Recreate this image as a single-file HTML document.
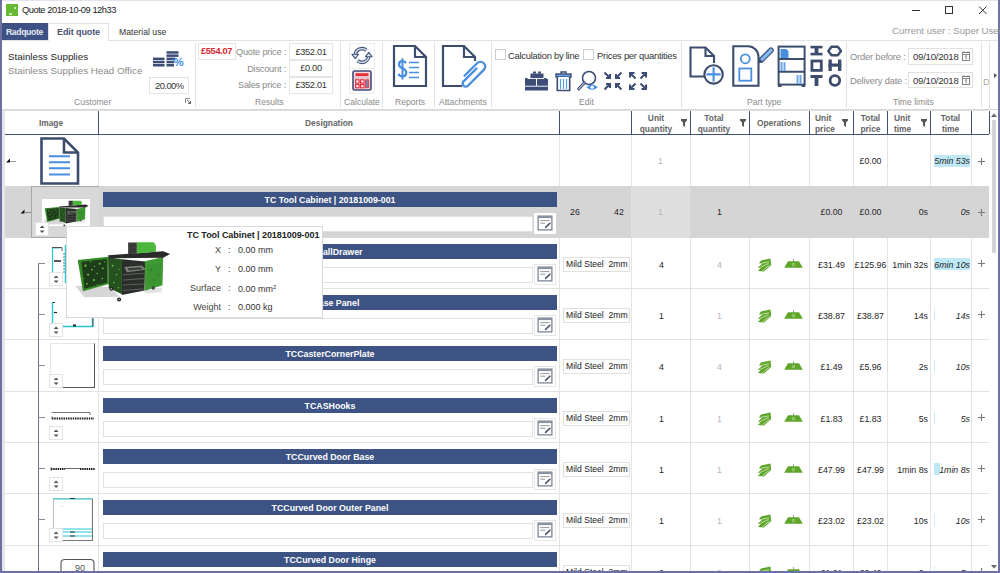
<!DOCTYPE html>
<html><head><meta charset="utf-8">
<style>
*{margin:0;padding:0;box-sizing:border-box}
html,body{width:1000px;height:573px;overflow:hidden;background:#fff}
body{position:relative;font-family:"Liberation Sans",sans-serif;font-size:9px;color:#222}
.a{position:absolute}
.t{position:absolute;white-space:nowrap;line-height:1}
.gl{position:absolute;top:97px;font-size:8.6px;color:#8a8a8a;white-space:nowrap;line-height:10px}
.sep{position:absolute;top:42px;height:66px;width:1px;background:#e3e3e3}
.box{position:absolute;background:#fff;border:1px solid #e0e0e0}
.hd{position:absolute;top:111px;height:23px;font-weight:bold;font-size:8.4px;color:#666;line-height:11px;white-space:nowrap}
.vl{position:absolute;top:135px;height:438px;width:1px;background:#e4e4e4}
.hl{position:absolute;left:4px;width:985px;height:1px;background:#e2e2e2}
.bar{position:absolute;left:103px;width:454px;height:15px;background:#3c5384;color:#fff;font-weight:bold;font-size:8.8px;line-height:17px;text-align:center;white-space:nowrap}
.tb{position:absolute;left:103px;width:430px;height:16px;background:#fff;border:1px solid #e0e0e0}
.eb{position:absolute;left:534px;width:22px;height:21px;background:#fff;border:1px solid #e6e6e6}
.mat{position:absolute;left:563px;width:67px;height:15px;background:#fff;border:1px solid #e0e0e0;font-size:8.6px;line-height:13px;padding-left:2px;white-space:nowrap;color:#222}
.num{position:absolute;font-size:8.8px;line-height:10px;white-space:nowrap;color:#222}
.sp{position:absolute;width:14px;height:14px;background:#fff;border:1px solid #e2e2e2}
</style></head><body>

<!-- TABLE START -->
<!-- table body -->
<div class="hl" style="top:186px"></div>
<div class="hl" style="top:237px"></div>
<div class="hl" style="top:288px"></div>
<div class="hl" style="top:339px"></div>
<div class="hl" style="top:391px"></div>
<div class="hl" style="top:442px"></div>
<div class="hl" style="top:493px"></div>
<div class="hl" style="top:545px"></div>
<div class="vl" style="left:98px"></div>
<div class="vl" style="left:559px"></div>
<div class="vl" style="left:631px"></div>
<div class="vl" style="left:690px"></div>
<div class="vl" style="left:749px"></div>
<div class="vl" style="left:809px"></div>
<div class="vl" style="left:853px"></div>
<div class="vl" style="left:887px"></div>
<div class="vl" style="left:930px"></div>
<div class="vl" style="left:971px"></div>
<div class="a" style="left:4px;top:186px;width:985px;height:52px;background:#d6d5d6"></div>
<div class="a" style="left:631px;top:186px;width:59px;height:52px;background:#e0dfe0"></div>
<div class="a" style="left:31px;top:186px;width:68px;height:52px;background:#d9d8d9;border:1px solid #a8a8a8;border-right:none"></div>
<!-- table header -->
<div class="a" style="left:4px;top:110px;width:985px;height:1px;background:#e0e0e0"></div>
<div class="a" style="left:4px;top:134px;width:985px;height:1px;background:#44507a"></div>
<div class="a" style="left:98px;top:111px;width:1px;height:23px;background:#44507a"></div>
<div class="a" style="left:559px;top:111px;width:1px;height:23px;background:#44507a"></div>
<div class="a" style="left:631px;top:111px;width:1px;height:23px;background:#44507a"></div>
<div class="a" style="left:690px;top:111px;width:1px;height:23px;background:#44507a"></div>
<div class="a" style="left:749px;top:111px;width:1px;height:23px;background:#44507a"></div>
<div class="a" style="left:809px;top:111px;width:1px;height:23px;background:#44507a"></div>
<div class="a" style="left:853px;top:111px;width:1px;height:23px;background:#44507a"></div>
<div class="a" style="left:887px;top:111px;width:1px;height:23px;background:#44507a"></div>
<div class="a" style="left:930px;top:111px;width:1px;height:23px;background:#44507a"></div>
<div class="a" style="left:971px;top:111px;width:1px;height:23px;background:#44507a"></div>
<div class="a" style="left:989px;top:111px;width:1px;height:23px;background:#44507a"></div>
<div class="hd" style="left:4px;width:94px;top:118px;text-align:center">Image</div>
<div class="hd" style="left:99px;width:460px;top:118px;text-align:center">Designation</div>
<div class="hd" style="left:631px;width:50px;top:113px;text-align:center">Unit<br>quantity</div>
<div class="hd" style="left:690px;width:48px;top:113px;text-align:center">Total<br>quantity</div>
<div class="hd" style="left:749px;width:60px;top:118px;text-align:center">Operations</div>
<div class="hd" style="left:815px;width:30px;top:113px;text-align:left">Unit<br>price</div>
<div class="hd" style="left:853px;width:35px;top:113px;text-align:center">Total<br>price</div>
<div class="hd" style="left:894px;width:30px;top:113px;text-align:left">Unit<br>time</div>
<div class="hd" style="left:930px;width:41px;top:113px;text-align:center">Total<br>time</div>
<svg class="a" style="left:681px;top:119px" width="6" height="8" viewBox="0 0 6 8"><path d="M0 0H6V1.5L4 3.5V8L2 6.5V3.5L0 1.5Z" fill="#555"/></svg>
<svg class="a" style="left:740px;top:119px" width="6" height="8" viewBox="0 0 6 8"><path d="M0 0H6V1.5L4 3.5V8L2 6.5V3.5L0 1.5Z" fill="#555"/></svg>
<svg class="a" style="left:842px;top:119px" width="6" height="8" viewBox="0 0 6 8"><path d="M0 0H6V1.5L4 3.5V8L2 6.5V3.5L0 1.5Z" fill="#555"/></svg>
<svg class="a" style="left:921px;top:119px" width="6" height="8" viewBox="0 0 6 8"><path d="M0 0H6V1.5L4 3.5V8L2 6.5V3.5L0 1.5Z" fill="#555"/></svg>
<div class="a" style="left:990px;top:110px;width:8px;height:462px;background:#fff"></div>
<svg class="a" style="left:991px;top:113px" width="6" height="4" viewBox="0 0 6 4"><path d="M0 4L3 0.5L6 4Z" fill="#666"/></svg>
<svg class="a" style="left:991px;top:565px" width="6" height="4" viewBox="0 0 6 4"><path d="M0 0L3 3.5L6 0Z" fill="#666"/></svg>
<div class="a" style="left:992px;top:120px;width:4px;height:133px;background:#d4d4d4"></div>
<div class="a" style="left:2px;top:110px;width:3px;height:462px;background:#e3e6eb"></div>
<svg class="a" style="left:5px;top:157px" width="12" height="7" viewBox="0 0 12 7"><path d="M1 5.5L5 1.5V5.5Z" fill="#111"/><path d="M5 4.5H11" stroke="#999" stroke-width="1"/></svg>
<svg class="a" style="left:39px;top:136px" width="42" height="50" viewBox="0 0 42 50">
 <path d="M2.5 2.5H25L39 16.5V47.5H2.5Z" fill="#fff" stroke="#3d4d6e" stroke-width="2.6"/>
 <path d="M25 2.5V16.5H39" fill="none" stroke="#3d4d6e" stroke-width="2.6"/>
 <g stroke="#4a8fdf" stroke-width="2"><path d="M10 20.3H31M10 26.3H31M10 32.3H31M10 38.5H31"/></g>
</svg>
<div class="num" style="left:631px;width:59px;top:156px;text-align:center;color:#b5b5b5;">1</div>
<div class="num" style="left:853px;width:35px;top:156px;text-align:center;color:#262626;">£0.00</div>
<div class="a" style="left:934px;top:155px;width:36px;height:12px;background:#bfe9f7"></div>
<div class="num" style="left:930px;width:40px;top:156px;text-align:right;color:#262626;font-style:italic;">5min 53s</div>
<svg class="a" style="left:977px;top:157px" width="9" height="9" viewBox="0 0 9 9"><path d="M4.5 1V8M1 4.5H8" stroke="#7a7a7a" stroke-width="1.1"/></svg>
<svg class="a" style="left:19px;top:208px" width="13" height="7" viewBox="0 0 13 7"><path d="M1.5 5.5L5.5 1.5V5.5Z" fill="#111"/><path d="M5.5 4.5H12" stroke="#888" stroke-width="1"/></svg>
<div class="a" style="left:42px;top:199px;width:48px;height:27px;background:#fff"></div>
<svg class="a" style="left:41px;top:198px" width="50" height="32" viewBox="0 0 813 573" preserveAspectRatio="none">
 <path d="M40 385L300 395L390 470L110 475Z" fill="#c4c4c4" opacity="0.7"/>
 <path d="M560 425L715 395L705 435L600 445Z" fill="#cfcfcf" opacity="0.6"/>
 <path d="M60 185L295 160L300 372L100 428Z" fill="#348a27"/>
 <path d="M88 200L285 178L288 360L112 408Z" fill="#1e3d19"/>
 <path d="M295 165L402 180L402 452L300 402Z" fill="#25521e"/>
 <path d="M402 180L582 198L577 422L402 456Z" fill="#2b2f2b"/>
 <g stroke="#5c5f5c" stroke-width="8"><path d="M410 300L572 288M410 340L572 330M410 380L572 372M410 420L572 410"/></g>
 <path d="M420 240L555 228L592 262L440 280Z" fill="#7c7f7c"/>
 <path d="M445 250L545 242L565 258L455 268Z" fill="#3a3c3a"/>
 <path d="M580 195L722 162L716 382L580 424Z" fill="#3f9a33"/>
 <path d="M598 230L700 205L698 360L600 390Z" fill="#3a8f30" opacity="0.6"/>
 <path d="M295 150L722 118L775 140L722 168L300 172Z" fill="#2a2a2a"/>
 <path d="M450 50L518 50L518 135L450 142Z" fill="#3a3a3a"/>
 <path d="M518 48L648 48L665 72L665 122L518 136Z" fill="#4db63c"/>
 <g fill="#6cc64c">
  <circle cx="120" cy="230" r="9"/><circle cx="170" cy="260" r="7"/><circle cx="230" cy="215" r="8"/><circle cx="140" cy="300" r="8"/><circle cx="210" cy="290" r="6"/><circle cx="255" cy="250" r="7"/><circle cx="185" cy="340" r="8"/><circle cx="250" cy="330" r="6"/><circle cx="130" cy="370" r="7"/><circle cx="215" cy="380" r="5"/><circle cx="160" cy="200" r="5"/><circle cx="270" cy="200" r="5"/><circle cx="100" cy="330" r="5"/><circle cx="190" cy="235" r="5"/>
  <circle cx="330" cy="230" r="7"/><circle cx="360" cy="300" r="6"/><circle cx="340" cy="360" r="6"/><circle cx="380" cy="260" r="5"/><circle cx="375" cy="400" r="5"/>
 </g>
 <g fill="#2e7a24"><circle cx="630" cy="260" r="9"/><circle cx="680" cy="300" r="7"/><circle cx="650" cy="340" r="6"/><circle cx="700" cy="230" r="5"/></g>
 <g fill="#2a2a2a"><circle cx="320" cy="408" r="15"/><circle cx="380" cy="492" r="16"/><circle cx="645" cy="402" r="13"/></g>
 <g fill="#aaa"><circle cx="320" cy="408" r="6"/><circle cx="380" cy="492" r="6"/><circle cx="645" cy="402" r="5"/></g>
</svg>
<div class="sp" style="left:35px;top:222px"></div>
<div class="bar" style="top:192px">TC Tool Cabinet | 20181009-001</div>
<div class="tb" style="top:216px"></div>
<div class="num" style="left:570px;width:0px;top:207px;text-align:center;color:#262626;">26</div>
<div class="num" style="left:614px;width:0px;top:207px;text-align:center;color:#262626;">42</div>
<div class="num" style="left:631px;width:59px;top:207px;text-align:center;color:#b5b5b5;">1</div>
<div class="num" style="left:690px;width:59px;top:207px;text-align:center;color:#262626;">1</div>
<div class="num" style="left:809px;width:45px;top:207px;text-align:center;color:#262626;">£0.00</div>
<div class="num" style="left:853px;width:35px;top:207px;text-align:center;color:#262626;">£0.00</div>
<div class="num" style="left:887px;width:41px;top:207px;text-align:right;color:#262626;">0s</div>
<div class="num" style="left:930px;width:40px;top:207px;text-align:right;color:#262626;font-style:italic;">0s</div>
<svg class="a" style="left:977px;top:208px" width="9" height="9" viewBox="0 0 9 9"><path d="M4.5 1V8M1 4.5H8" stroke="#7a7a7a" stroke-width="1.1"/></svg>
<div class="bar" style="top:244px">TCSmallDrawer</div>
<div class="tb" style="top:267px"></div>
<div class="eb" style="top:264px;height:21px"></div>
<div class="mat" style="top:257px">Mild Steel&nbsp; 2mm</div>
<div class="num" style="left:632px;width:59px;top:260px;text-align:center;color:#262626;">4</div>
<div class="num" style="left:690px;width:59px;top:260px;text-align:center;color:#b5b5b5;">4</div>
<svg class="a" style="left:757px;top:258px" width="15" height="14" viewBox="0 0 15 14"><path d="M4 2.5L13.5 0.5L14.2 7L7 13.5L0.8 13L3.5 10.5L1 9.5L5 6L2 5.2Z" fill="#5ea52a"/><path d="M3.5 5.5L12 3.8M2.5 9.8L11.5 5.5M5.5 12.8L12.5 7" stroke="#d8efc4" stroke-width="0.8"/></svg>
<svg class="a" style="left:784px;top:259px" width="19" height="9" viewBox="0 0 19 9"><path d="M9.5 0V3" stroke="#8a8a8a" stroke-width="0.8"/><path d="M4 2.2H15L18.8 8.8H0.2Z" fill="#5ea52a"/><circle cx="9.5" cy="5.6" r="1.2" fill="none" stroke="#cfe8b8" stroke-width="0.7"/></svg>
<div class="num" style="left:809px;width:45px;top:260px;text-align:center;color:#262626;">£31.49</div>
<div class="num" style="left:853px;width:35px;top:260px;text-align:center;color:#262626;">£125.96</div>
<div class="num" style="left:887px;width:41px;top:260px;text-align:right;color:#262626;">1min 32s</div>
<div class="a" style="left:934px;top:258px;width:36px;height:12px;background:#bfe9f7"></div>
<div class="num" style="left:930px;width:40px;top:260px;text-align:right;color:#262626;font-style:italic;">6min 10s</div>
<svg class="a" style="left:977px;top:259px" width="9" height="9" viewBox="0 0 9 9"><path d="M4.5 1V8M1 4.5H8" stroke="#7a7a7a" stroke-width="1.1"/></svg>
<div class="bar" style="top:295px">TCBase Panel</div>
<div class="tb" style="top:318px"></div>
<div class="eb" style="top:315px;height:21px"></div>
<div class="mat" style="top:308px">Mild Steel&nbsp; 2mm</div>
<div class="num" style="left:632px;width:59px;top:311px;text-align:center;color:#262626;">1</div>
<div class="num" style="left:690px;width:59px;top:311px;text-align:center;color:#b5b5b5;">1</div>
<svg class="a" style="left:757px;top:309px" width="15" height="14" viewBox="0 0 15 14"><path d="M4 2.5L13.5 0.5L14.2 7L7 13.5L0.8 13L3.5 10.5L1 9.5L5 6L2 5.2Z" fill="#5ea52a"/><path d="M3.5 5.5L12 3.8M2.5 9.8L11.5 5.5M5.5 12.8L12.5 7" stroke="#d8efc4" stroke-width="0.8"/></svg>
<svg class="a" style="left:784px;top:310px" width="19" height="9" viewBox="0 0 19 9"><path d="M9.5 0V3" stroke="#8a8a8a" stroke-width="0.8"/><path d="M4 2.2H15L18.8 8.8H0.2Z" fill="#5ea52a"/><circle cx="9.5" cy="5.6" r="1.2" fill="none" stroke="#cfe8b8" stroke-width="0.7"/></svg>
<div class="num" style="left:809px;width:45px;top:311px;text-align:center;color:#262626;">£38.87</div>
<div class="num" style="left:853px;width:35px;top:311px;text-align:center;color:#262626;">£38.87</div>
<div class="num" style="left:887px;width:41px;top:311px;text-align:right;color:#262626;">14s</div>
<div class="a" style="left:934px;top:309px;width:1px;height:12px;background:#cdeef9"></div>
<div class="num" style="left:930px;width:40px;top:311px;text-align:right;color:#262626;font-style:italic;">14s</div>
<svg class="a" style="left:977px;top:310px" width="9" height="9" viewBox="0 0 9 9"><path d="M4.5 1V8M1 4.5H8" stroke="#7a7a7a" stroke-width="1.1"/></svg>
<div class="bar" style="top:346px">TCCasterCornerPlate</div>
<div class="tb" style="top:369px"></div>
<div class="eb" style="top:366px;height:21px"></div>
<div class="mat" style="top:359px">Mild Steel&nbsp; 2mm</div>
<div class="num" style="left:632px;width:59px;top:362px;text-align:center;color:#262626;">4</div>
<div class="num" style="left:690px;width:59px;top:362px;text-align:center;color:#b5b5b5;">4</div>
<svg class="a" style="left:757px;top:360px" width="15" height="14" viewBox="0 0 15 14"><path d="M4 2.5L13.5 0.5L14.2 7L7 13.5L0.8 13L3.5 10.5L1 9.5L5 6L2 5.2Z" fill="#5ea52a"/><path d="M3.5 5.5L12 3.8M2.5 9.8L11.5 5.5M5.5 12.8L12.5 7" stroke="#d8efc4" stroke-width="0.8"/></svg>
<svg class="a" style="left:784px;top:361px" width="19" height="9" viewBox="0 0 19 9"><path d="M9.5 0V3" stroke="#8a8a8a" stroke-width="0.8"/><path d="M4 2.2H15L18.8 8.8H0.2Z" fill="#5ea52a"/><circle cx="9.5" cy="5.6" r="1.2" fill="none" stroke="#cfe8b8" stroke-width="0.7"/></svg>
<div class="num" style="left:809px;width:45px;top:362px;text-align:center;color:#262626;">£1.49</div>
<div class="num" style="left:853px;width:35px;top:362px;text-align:center;color:#262626;">£5.96</div>
<div class="num" style="left:887px;width:41px;top:362px;text-align:right;color:#262626;">2s</div>
<div class="a" style="left:934px;top:360px;width:1px;height:12px;background:#cdeef9"></div>
<div class="num" style="left:930px;width:40px;top:362px;text-align:right;color:#262626;font-style:italic;">10s</div>
<div class="bar" style="top:398px">TCASHooks</div>
<div class="tb" style="top:421px"></div>
<div class="eb" style="top:418px;height:21px"></div>
<div class="mat" style="top:411px">Mild Steel&nbsp; 2mm</div>
<div class="num" style="left:632px;width:59px;top:414px;text-align:center;color:#262626;">1</div>
<div class="num" style="left:690px;width:59px;top:414px;text-align:center;color:#b5b5b5;">1</div>
<svg class="a" style="left:757px;top:412px" width="15" height="14" viewBox="0 0 15 14"><path d="M4 2.5L13.5 0.5L14.2 7L7 13.5L0.8 13L3.5 10.5L1 9.5L5 6L2 5.2Z" fill="#5ea52a"/><path d="M3.5 5.5L12 3.8M2.5 9.8L11.5 5.5M5.5 12.8L12.5 7" stroke="#d8efc4" stroke-width="0.8"/></svg>
<svg class="a" style="left:784px;top:413px" width="19" height="9" viewBox="0 0 19 9"><path d="M9.5 0V3" stroke="#8a8a8a" stroke-width="0.8"/><path d="M4 2.2H15L18.8 8.8H0.2Z" fill="#5ea52a"/><circle cx="9.5" cy="5.6" r="1.2" fill="none" stroke="#cfe8b8" stroke-width="0.7"/></svg>
<div class="num" style="left:809px;width:45px;top:414px;text-align:center;color:#262626;">£1.83</div>
<div class="num" style="left:853px;width:35px;top:414px;text-align:center;color:#262626;">£1.83</div>
<div class="num" style="left:887px;width:41px;top:414px;text-align:right;color:#262626;">5s</div>
<div class="a" style="left:934px;top:412px;width:1px;height:12px;background:#cdeef9"></div>
<div class="num" style="left:930px;width:40px;top:414px;text-align:right;color:#262626;font-style:italic;">5s</div>
<svg class="a" style="left:977px;top:413px" width="9" height="9" viewBox="0 0 9 9"><path d="M4.5 1V8M1 4.5H8" stroke="#7a7a7a" stroke-width="1.1"/></svg>
<div class="bar" style="top:449px">TCCurved Door Base</div>
<div class="tb" style="top:472px"></div>
<div class="eb" style="top:469px;height:21px"></div>
<div class="mat" style="top:462px">Mild Steel&nbsp; 2mm</div>
<div class="num" style="left:632px;width:59px;top:465px;text-align:center;color:#262626;">1</div>
<div class="num" style="left:690px;width:59px;top:465px;text-align:center;color:#b5b5b5;">1</div>
<svg class="a" style="left:757px;top:463px" width="15" height="14" viewBox="0 0 15 14"><path d="M4 2.5L13.5 0.5L14.2 7L7 13.5L0.8 13L3.5 10.5L1 9.5L5 6L2 5.2Z" fill="#5ea52a"/><path d="M3.5 5.5L12 3.8M2.5 9.8L11.5 5.5M5.5 12.8L12.5 7" stroke="#d8efc4" stroke-width="0.8"/></svg>
<svg class="a" style="left:784px;top:464px" width="19" height="9" viewBox="0 0 19 9"><path d="M9.5 0V3" stroke="#8a8a8a" stroke-width="0.8"/><path d="M4 2.2H15L18.8 8.8H0.2Z" fill="#5ea52a"/><circle cx="9.5" cy="5.6" r="1.2" fill="none" stroke="#cfe8b8" stroke-width="0.7"/></svg>
<div class="num" style="left:809px;width:45px;top:465px;text-align:center;color:#262626;">£47.99</div>
<div class="num" style="left:853px;width:35px;top:465px;text-align:center;color:#262626;">£47.99</div>
<div class="num" style="left:887px;width:41px;top:465px;text-align:right;color:#262626;">1min 8s</div>
<div class="a" style="left:934px;top:463px;width:6px;height:12px;background:#bfe9f7"></div>
<div class="num" style="left:930px;width:40px;top:465px;text-align:right;color:#262626;font-style:italic;">1min 8s</div>
<svg class="a" style="left:977px;top:464px" width="9" height="9" viewBox="0 0 9 9"><path d="M4.5 1V8M1 4.5H8" stroke="#7a7a7a" stroke-width="1.1"/></svg>
<div class="bar" style="top:500px">TCCurved Door Outer Panel</div>
<div class="tb" style="top:523px"></div>
<div class="eb" style="top:520px;height:21px"></div>
<div class="mat" style="top:513px">Mild Steel&nbsp; 2mm</div>
<div class="num" style="left:632px;width:59px;top:516px;text-align:center;color:#262626;">1</div>
<div class="num" style="left:690px;width:59px;top:516px;text-align:center;color:#b5b5b5;">1</div>
<svg class="a" style="left:757px;top:514px" width="15" height="14" viewBox="0 0 15 14"><path d="M4 2.5L13.5 0.5L14.2 7L7 13.5L0.8 13L3.5 10.5L1 9.5L5 6L2 5.2Z" fill="#5ea52a"/><path d="M3.5 5.5L12 3.8M2.5 9.8L11.5 5.5M5.5 12.8L12.5 7" stroke="#d8efc4" stroke-width="0.8"/></svg>
<svg class="a" style="left:784px;top:515px" width="19" height="9" viewBox="0 0 19 9"><path d="M9.5 0V3" stroke="#8a8a8a" stroke-width="0.8"/><path d="M4 2.2H15L18.8 8.8H0.2Z" fill="#5ea52a"/><circle cx="9.5" cy="5.6" r="1.2" fill="none" stroke="#cfe8b8" stroke-width="0.7"/></svg>
<div class="num" style="left:809px;width:45px;top:516px;text-align:center;color:#262626;">£23.02</div>
<div class="num" style="left:853px;width:35px;top:516px;text-align:center;color:#262626;">£23.02</div>
<div class="num" style="left:887px;width:41px;top:516px;text-align:right;color:#262626;">10s</div>
<div class="a" style="left:934px;top:514px;width:1px;height:12px;background:#cdeef9"></div>
<div class="num" style="left:930px;width:40px;top:516px;text-align:right;color:#262626;font-style:italic;">10s</div>
<svg class="a" style="left:977px;top:515px" width="9" height="9" viewBox="0 0 9 9"><path d="M4.5 1V8M1 4.5H8" stroke="#7a7a7a" stroke-width="1.1"/></svg>
<div class="bar" style="top:552px">TCCurved Door Hinge</div>
<div class="tb" style="top:575px"></div>
<div class="eb" style="top:572px;height:21px"></div>
<div class="mat" style="top:565px">Mild Steel&nbsp; 2mm</div>
<div class="num" style="left:632px;width:59px;top:568px;text-align:center;color:#262626;">2</div>
<div class="num" style="left:690px;width:59px;top:568px;text-align:center;color:#b5b5b5;">2</div>
<svg class="a" style="left:757px;top:566px" width="15" height="14" viewBox="0 0 15 14"><path d="M4 2.5L13.5 0.5L14.2 7L7 13.5L0.8 13L3.5 10.5L1 9.5L5 6L2 5.2Z" fill="#5ea52a"/><path d="M3.5 5.5L12 3.8M2.5 9.8L11.5 5.5M5.5 12.8L12.5 7" stroke="#d8efc4" stroke-width="0.8"/></svg>
<svg class="a" style="left:784px;top:567px" width="19" height="9" viewBox="0 0 19 9"><path d="M9.5 0V3" stroke="#8a8a8a" stroke-width="0.8"/><path d="M4 2.2H15L18.8 8.8H0.2Z" fill="#5ea52a"/><circle cx="9.5" cy="5.6" r="1.2" fill="none" stroke="#cfe8b8" stroke-width="0.7"/></svg>
<div class="num" style="left:809px;width:45px;top:568px;text-align:center;color:#262626;">£1.21</div>
<div class="num" style="left:853px;width:35px;top:568px;text-align:center;color:#262626;">£2.42</div>
<div class="num" style="left:887px;width:41px;top:568px;text-align:right;color:#262626;">2s</div>
<div class="a" style="left:934px;top:566px;width:1px;height:12px;background:#cdeef9"></div>
<div class="num" style="left:930px;width:40px;top:568px;text-align:right;color:#262626;font-style:italic;">5s</div>
<svg class="a" style="left:977px;top:567px" width="9" height="9" viewBox="0 0 9 9"><path d="M4.5 1V8M1 4.5H8" stroke="#7a7a7a" stroke-width="1.1"/></svg>
<div class="a" style="left:38px;top:263px;width:1px;height:310px;background:#6e7098"></div>
<div class="a" style="left:38px;top:263px;width:7px;height:1px;background:#8a8a8a"></div>
<div class="a" style="left:38px;top:314px;width:7px;height:1px;background:#8a8a8a"></div>
<div class="a" style="left:38px;top:365px;width:7px;height:1px;background:#8a8a8a"></div>
<div class="a" style="left:38px;top:417px;width:7px;height:1px;background:#8a8a8a"></div>
<div class="a" style="left:38px;top:468px;width:7px;height:1px;background:#8a8a8a"></div>
<div class="a" style="left:38px;top:519px;width:7px;height:1px;background:#8a8a8a"></div>
<div class="a" style="left:38px;top:571px;width:7px;height:1px;background:#8a8a8a"></div>
<div class="eb" style="top:213px;border-color:#fff"></div>
<svg class="a" style="left:537px;top:215px" width="16" height="16" viewBox="0 0 16 16"><rect x="1.1" y="1.1" width="13.8" height="13.8" fill="#fff" stroke="#747c8c" stroke-width="1.2"/><rect x="1.1" y="1.1" width="13.8" height="2" fill="#8a92a2"/><path d="M3.3 5.6H12.5M3.3 8.2H8.2" stroke="#8a8a8a" stroke-width="0.9"/><path d="M8.6 12.4L12.9 8.2" stroke="#4c5468" stroke-width="1.6" stroke-linecap="round"/></svg>
<svg class="a" style="left:537px;top:266px" width="16" height="16" viewBox="0 0 16 16"><rect x="1.1" y="1.1" width="13.8" height="13.8" fill="#fff" stroke="#747c8c" stroke-width="1.2"/><rect x="1.1" y="1.1" width="13.8" height="2" fill="#8a92a2"/><path d="M3.3 5.6H12.5M3.3 8.2H8.2" stroke="#8a8a8a" stroke-width="0.9"/><path d="M8.6 12.4L12.9 8.2" stroke="#4c5468" stroke-width="1.6" stroke-linecap="round"/></svg>
<svg class="a" style="left:537px;top:317px" width="16" height="16" viewBox="0 0 16 16"><rect x="1.1" y="1.1" width="13.8" height="13.8" fill="#fff" stroke="#747c8c" stroke-width="1.2"/><rect x="1.1" y="1.1" width="13.8" height="2" fill="#8a92a2"/><path d="M3.3 5.6H12.5M3.3 8.2H8.2" stroke="#8a8a8a" stroke-width="0.9"/><path d="M8.6 12.4L12.9 8.2" stroke="#4c5468" stroke-width="1.6" stroke-linecap="round"/></svg>
<svg class="a" style="left:537px;top:368px" width="16" height="16" viewBox="0 0 16 16"><rect x="1.1" y="1.1" width="13.8" height="13.8" fill="#fff" stroke="#747c8c" stroke-width="1.2"/><rect x="1.1" y="1.1" width="13.8" height="2" fill="#8a92a2"/><path d="M3.3 5.6H12.5M3.3 8.2H8.2" stroke="#8a8a8a" stroke-width="0.9"/><path d="M8.6 12.4L12.9 8.2" stroke="#4c5468" stroke-width="1.6" stroke-linecap="round"/></svg>
<svg class="a" style="left:537px;top:420px" width="16" height="16" viewBox="0 0 16 16"><rect x="1.1" y="1.1" width="13.8" height="13.8" fill="#fff" stroke="#747c8c" stroke-width="1.2"/><rect x="1.1" y="1.1" width="13.8" height="2" fill="#8a92a2"/><path d="M3.3 5.6H12.5M3.3 8.2H8.2" stroke="#8a8a8a" stroke-width="0.9"/><path d="M8.6 12.4L12.9 8.2" stroke="#4c5468" stroke-width="1.6" stroke-linecap="round"/></svg>
<svg class="a" style="left:537px;top:471px" width="16" height="16" viewBox="0 0 16 16"><rect x="1.1" y="1.1" width="13.8" height="13.8" fill="#fff" stroke="#747c8c" stroke-width="1.2"/><rect x="1.1" y="1.1" width="13.8" height="2" fill="#8a92a2"/><path d="M3.3 5.6H12.5M3.3 8.2H8.2" stroke="#8a8a8a" stroke-width="0.9"/><path d="M8.6 12.4L12.9 8.2" stroke="#4c5468" stroke-width="1.6" stroke-linecap="round"/></svg>
<svg class="a" style="left:537px;top:522px" width="16" height="16" viewBox="0 0 16 16"><rect x="1.1" y="1.1" width="13.8" height="13.8" fill="#fff" stroke="#747c8c" stroke-width="1.2"/><rect x="1.1" y="1.1" width="13.8" height="2" fill="#8a92a2"/><path d="M3.3 5.6H12.5M3.3 8.2H8.2" stroke="#8a8a8a" stroke-width="0.9"/><path d="M8.6 12.4L12.9 8.2" stroke="#4c5468" stroke-width="1.6" stroke-linecap="round"/></svg>
<svg class="a" style="left:537px;top:574px" width="16" height="16" viewBox="0 0 16 16"><rect x="1.1" y="1.1" width="13.8" height="13.8" fill="#fff" stroke="#747c8c" stroke-width="1.2"/><rect x="1.1" y="1.1" width="13.8" height="2" fill="#8a92a2"/><path d="M3.3 5.6H12.5M3.3 8.2H8.2" stroke="#8a8a8a" stroke-width="0.9"/><path d="M8.6 12.4L12.9 8.2" stroke="#4c5468" stroke-width="1.6" stroke-linecap="round"/></svg>
<svg class="a" style="left:50px;top:243px" width="17" height="42" viewBox="0 0 17 42"><path d="M2.5 36V5H10" stroke="#29c8d8" stroke-width="1.2" fill="none"/><path d="M2 4.5H12V8" stroke="#333" stroke-width="0.8" fill="none"/><path d="M4 18H11" stroke="#222" stroke-width="1.5"/><path d="M15.5 2V40" stroke="#29c8d8" stroke-width="1.5"/><path d="M14 10V30" stroke="#777" stroke-width="1" stroke-dasharray="2 1"/></svg>
<svg class="a" style="left:50px;top:299px" width="46" height="30" viewBox="0 0 46 30"><path d="M2.5 3V27.5H42.5V18" stroke="#29c8d8" stroke-width="1.4" fill="none"/><path d="M2.5 3.5H5" stroke="#333" stroke-width="1"/><path d="M4 13.5H7" stroke="#222" stroke-width="1.2"/><rect x="23" y="25.5" width="3" height="2" fill="#222"/><path d="M43 18V28" stroke="#333" stroke-width="0.8"/></svg>
<div class="a" style="left:50px;top:343px;width:45px;height:45px;background:#fff;border:1px solid #e6e6e6;border-right:1px solid #555;border-bottom:1px solid #555"></div>
<svg class="a" style="left:50px;top:410px" width="46" height="12" viewBox="0 0 46 12"><path d="M1.5 2.5H40M40 2.5V5" stroke="#555" stroke-width="0.8" fill="none"/><path d="M2 8.5H44" stroke="#222" stroke-width="2.2" stroke-dasharray="1.5 0.8"/><path d="M2 6.5V9" stroke="#444" stroke-width="0.8"/></svg>
<svg class="a" style="left:50px;top:465px" width="46" height="8" viewBox="0 0 46 8"><path d="M1 4H15M30 4H45" stroke="#222" stroke-width="2" stroke-dasharray="1.5 0.7"/><path d="M15 3.5H30" stroke="#444" stroke-width="0.8"/><path d="M1 2V6" stroke="#444" stroke-width="0.7"/></svg>
<svg class="a" style="left:52px;top:497px" width="44" height="47" viewBox="0 0 44 47"><rect x="1.5" y="1.5" width="39" height="42" fill="#fff" stroke="#bfbfbf" stroke-width="1"/><path d="M1.5 2H40.5M1.5 32H40.5M1.5 35H40.5M1.5 39H40.5" stroke="#29c8d8" stroke-width="1"/><path d="M40.5 2V43.5H1.5" stroke="#777" stroke-width="1.1" fill="none"/><path d="M18 1.5H23M18 35H23M18 39H23" stroke="#333" stroke-width="1"/><circle cx="10" cy="9" r="0.5" fill="#c99"/></svg>
<svg class="a" style="left:58px;top:558px" width="40" height="14" viewBox="0 0 40 14"><path d="M3 14V5Q3 1.5 7 1.5H32Q36 1.5 36 5V14" stroke="#555" stroke-width="1.1" fill="none"/><text x="17" y="13" font-family="Liberation Sans" font-size="9" fill="#555">90</text></svg>
<svg class="a" style="left:35px;top:222px" width="14" height="14" viewBox="0 0 14 14"><path d="M4.6 6.1H9.6L7.1 3.6Z M4.6 8.6H9.6L7.1 11.1Z" fill="#555"/></svg>
<div class="sp" style="left:49px;top:272px"></div>
<svg class="a" style="left:49px;top:272px" width="14" height="14" viewBox="0 0 14 14"><path d="M4.6 6.1H9.6L7.1 3.6Z M4.6 8.6H9.6L7.1 11.1Z" fill="#555"/></svg>
<div class="sp" style="left:49px;top:323px"></div>
<svg class="a" style="left:49px;top:323px" width="14" height="14" viewBox="0 0 14 14"><path d="M4.6 6.1H9.6L7.1 3.6Z M4.6 8.6H9.6L7.1 11.1Z" fill="#555"/></svg>
<div class="sp" style="left:49px;top:374px"></div>
<svg class="a" style="left:49px;top:374px" width="14" height="14" viewBox="0 0 14 14"><path d="M4.6 6.1H9.6L7.1 3.6Z M4.6 8.6H9.6L7.1 11.1Z" fill="#555"/></svg>
<div class="sp" style="left:49px;top:426px"></div>
<svg class="a" style="left:49px;top:426px" width="14" height="14" viewBox="0 0 14 14"><path d="M4.6 6.1H9.6L7.1 3.6Z M4.6 8.6H9.6L7.1 11.1Z" fill="#555"/></svg>
<div class="sp" style="left:49px;top:477px"></div>
<svg class="a" style="left:49px;top:477px" width="14" height="14" viewBox="0 0 14 14"><path d="M4.6 6.1H9.6L7.1 3.6Z M4.6 8.6H9.6L7.1 11.1Z" fill="#555"/></svg>
<div class="sp" style="left:49px;top:528px"></div>
<svg class="a" style="left:49px;top:528px" width="14" height="14" viewBox="0 0 14 14"><path d="M4.6 6.1H9.6L7.1 3.6Z M4.6 8.6H9.6L7.1 11.1Z" fill="#555"/></svg>
<div class="sp" style="left:49px;top:580px"></div>
<svg class="a" style="left:49px;top:580px" width="14" height="14" viewBox="0 0 14 14"><path d="M4.6 6.1H9.6L7.1 3.6Z M4.6 8.6H9.6L7.1 11.1Z" fill="#555"/></svg>
<div class="a" style="left:66px;top:226px;width:257px;height:92px;background:#fff;border:1px solid #d9d9d9"></div>
<div class="t" style="left:187px;top:231px;font-size:9px;font-weight:bold;color:#222;letter-spacing:-0.05px">TC Tool Cabinet | 20181009-001</div>
<div class="t" style="left:160px;width:61px;text-align:right;top:246px;font-size:9px;color:#444">X</div>
<div class="t" style="left:228px;top:246px;font-size:9px;color:#444">:</div>
<div class="t" style="left:160px;width:61px;text-align:right;top:265px;font-size:9px;color:#444">Y</div>
<div class="t" style="left:228px;top:265px;font-size:9px;color:#444">:</div>
<div class="t" style="left:160px;width:61px;text-align:right;top:284px;font-size:9px;color:#444">Surface</div>
<div class="t" style="left:228px;top:284px;font-size:9px;color:#444">:</div>
<div class="t" style="left:160px;width:61px;text-align:right;top:303px;font-size:9px;color:#444">Weight</div>
<div class="t" style="left:228px;top:303px;font-size:9px;color:#444">:</div>
<div class="t" style="left:238px;top:246px;font-size:9px;color:#333">0.00 mm</div>
<div class="t" style="left:238px;top:265px;font-size:9px;color:#333">0.00 mm</div>
<div class="t" style="left:238px;top:284px;font-size:9px;color:#333">0.00 mm<sup style="font-size:6px;vertical-align:3px">2</sup></div>
<div class="t" style="left:238px;top:303px;font-size:9px;color:#333">0.000 kg</div>
<svg class="a" style="left:70px;top:236px" width="105" height="74" viewBox="0 0 813 573" preserveAspectRatio="none">
 <path d="M40 385L300 395L390 470L110 475Z" fill="#c4c4c4" opacity="0.7"/>
 <path d="M560 425L715 395L705 435L600 445Z" fill="#cfcfcf" opacity="0.6"/>
 <path d="M60 185L295 160L300 372L100 428Z" fill="#348a27"/>
 <path d="M88 200L285 178L288 360L112 408Z" fill="#1e3d19"/>
 <path d="M295 165L402 180L402 452L300 402Z" fill="#25521e"/>
 <path d="M402 180L582 198L577 422L402 456Z" fill="#2b2f2b"/>
 <g stroke="#5c5f5c" stroke-width="8"><path d="M410 300L572 288M410 340L572 330M410 380L572 372M410 420L572 410"/></g>
 <path d="M420 240L555 228L592 262L440 280Z" fill="#7c7f7c"/>
 <path d="M445 250L545 242L565 258L455 268Z" fill="#3a3c3a"/>
 <path d="M580 195L722 162L716 382L580 424Z" fill="#3f9a33"/>
 <path d="M598 230L700 205L698 360L600 390Z" fill="#3a8f30" opacity="0.6"/>
 <path d="M295 150L722 118L775 140L722 168L300 172Z" fill="#2a2a2a"/>
 <path d="M450 50L518 50L518 135L450 142Z" fill="#3a3a3a"/>
 <path d="M518 48L648 48L665 72L665 122L518 136Z" fill="#4db63c"/>
 <g fill="#6cc64c">
  <circle cx="120" cy="230" r="9"/><circle cx="170" cy="260" r="7"/><circle cx="230" cy="215" r="8"/><circle cx="140" cy="300" r="8"/><circle cx="210" cy="290" r="6"/><circle cx="255" cy="250" r="7"/><circle cx="185" cy="340" r="8"/><circle cx="250" cy="330" r="6"/><circle cx="130" cy="370" r="7"/><circle cx="215" cy="380" r="5"/><circle cx="160" cy="200" r="5"/><circle cx="270" cy="200" r="5"/><circle cx="100" cy="330" r="5"/><circle cx="190" cy="235" r="5"/>
  <circle cx="330" cy="230" r="7"/><circle cx="360" cy="300" r="6"/><circle cx="340" cy="360" r="6"/><circle cx="380" cy="260" r="5"/><circle cx="375" cy="400" r="5"/>
 </g>
 <g fill="#2e7a24"><circle cx="630" cy="260" r="9"/><circle cx="680" cy="300" r="7"/><circle cx="650" cy="340" r="6"/><circle cx="700" cy="230" r="5"/></g>
 <g fill="#2a2a2a"><circle cx="320" cy="408" r="15"/><circle cx="380" cy="492" r="16"/><circle cx="645" cy="402" r="13"/></g>
 <g fill="#aaa"><circle cx="320" cy="408" r="6"/><circle cx="380" cy="492" r="6"/><circle cx="645" cy="402" r="5"/></g>
</svg>
<!-- TABLE END -->
<!-- window borders -->
<div class="a" style="left:0;top:0;width:1000px;height:1px;background:#e4e4ee"></div>
<div class="a" style="left:0;top:0;width:2px;height:573px;background:#6d6f9f"></div>
<div class="a" style="left:998px;top:0;width:2px;height:573px;background:#7072a6"></div>
<div class="a" style="left:0;top:571px;width:1000px;height:2px;background:#6d6fa8"></div>


<!-- title bar -->
<div class="a" style="left:6px;top:4px;width:12px;height:12px;background:#66b933"></div>
<div class="a" style="left:14px;top:7px;width:2px;height:2px;background:#c8eaa8"></div>
<div class="a" style="left:9px;top:13px;width:3px;height:2px;background:#c9e8b0"></div>
<div class="t" style="left:22px;top:6px;font-size:9.3px;color:#222;letter-spacing:-0.45px">Quote 2018-10-09 12h33</div>
<div class="a" style="left:912px;top:10px;width:8px;height:1px;background:#333"></div>
<div class="a" style="left:945px;top:6px;width:8px;height:8px;border:1px solid #333"></div>
<svg class="a" style="left:978px;top:6px" width="10" height="9" viewBox="0 0 10 9"><path d="M1 0.5L8.5 8M8.5 0.5L1 8" stroke="#333" stroke-width="1" fill="none"/></svg>

<!-- tabs -->
<div class="a" style="left:2px;top:23px;width:46px;height:17px;background:#3d5184"></div>
<div class="t" style="left:6px;top:28px;font-size:8.6px;font-weight:bold;color:#e6e8f0;letter-spacing:-0.35px">Radquote</div>
<div class="a" style="left:48px;top:23px;width:61px;height:18px;background:#fff;border:1px solid #e2e2e2;border-bottom:none"></div>
<div class="t" style="left:57px;top:28px;font-size:9px;font-weight:bold;color:#4b5372;letter-spacing:-0.1px">Edit quote</div>
<div class="t" style="left:119px;top:28px;font-size:8.7px;color:#333">Material use</div>
<div class="t" style="left:892px;top:26px;font-size:9.6px;color:#9a9a9a">Current user : Super User</div>

<!-- ribbon -->
<div class="a" style="left:2px;top:40px;width:46px;height:1px;background:#e2e2e2"></div>
<div class="a" style="left:109px;top:40px;width:889px;height:1px;background:#e2e2e2"></div>
<div class="a" style="left:2px;top:109px;width:996px;height:1px;background:#d6d6d6"></div>
<div class="sep" style="left:195px"></div>
<div class="sep" style="left:340px"></div>
<div class="sep" style="left:382px"></div>
<div class="sep" style="left:434px"></div>
<div class="sep" style="left:491px"></div>
<div class="sep" style="left:681px"></div>
<div class="sep" style="left:846px"></div>
<div class="sep" style="left:981px"></div>


<!-- Customer -->
<div class="t" style="left:8px;top:52px;font-size:9.8px;color:#262626">Stainless Supplies</div>
<div class="t" style="left:8px;top:66px;font-size:9.8px;color:#8c8c8c">Stainless Supplies Head Office</div>
<svg class="a" style="left:153px;top:51px" width="32" height="16" viewBox="0 0 32 16">
 <g fill="#3d4d75">
  <rect x="0" y="6.6" width="11.5" height="2.5"/><rect x="0" y="9.8" width="11.5" height="2.5"/><rect x="0" y="13" width="11.5" height="2.5"/>
  <rect x="13.5" y="0.2" width="12" height="2.5"/><rect x="13.5" y="3.4" width="12" height="2.5"/><rect x="13.5" y="6.6" width="9" height="2.5"/><rect x="13.5" y="9.8" width="7.5" height="2.5"/><rect x="13.5" y="13" width="7.5" height="2.5"/>
 </g>
 <text x="20.5" y="15.4" font-family="Liberation Sans" font-weight="bold" font-size="11.5" fill="#3d8fe0" letter-spacing="-0.5">%</text>
</svg>
<div class="box" style="left:149px;top:77px;width:40px;height:17px;border-color:#e4e4e4"></div>
<div class="t" style="left:155px;top:81px;font-size:9.4px;color:#333;letter-spacing:-0.55px">20.00%</div>
<div class="gl" style="left:74px">Customer</div>
<svg class="a" style="left:185px;top:98px" width="6" height="6" viewBox="0 0 6 6"><path d="M0.5 5V0.5H5" stroke="#888" fill="none"/><path d="M2 2L5.5 5.5M5.5 3V5.5H3" stroke="#666" fill="none"/></svg>

<!-- Results -->
<div class="box" style="left:198px;top:43px;width:38px;height:17px;border-color:#e6e6e6"></div>
<div class="t" style="left:201px;top:47px;font-size:9.2px;font-weight:bold;color:#d9252f;letter-spacing:-0.3px">£554.07</div>
<div class="t" style="left:236px;top:48px;width:50px;text-align:right;font-size:9.2px;color:#8a8a8a;letter-spacing:-0.2px">Quote price :</div>
<div class="t" style="left:236px;top:65px;width:50px;text-align:right;font-size:9.2px;color:#8a8a8a;letter-spacing:-0.2px">Discount :</div>
<div class="t" style="left:236px;top:81px;width:50px;text-align:right;font-size:9.2px;color:#8a8a8a;letter-spacing:-0.2px">Sales price :</div>
<div class="box" style="left:289px;top:43px;width:44px;height:17px;border-color:#e6e6e6"></div>
<div class="box" style="left:289px;top:60px;width:44px;height:17px;border-color:#e6e6e6"></div>
<div class="box" style="left:289px;top:77px;width:44px;height:17px;border-color:#e6e6e6"></div>
<div class="t" style="left:289px;top:48px;width:44px;text-align:center;font-size:9.2px;color:#333;letter-spacing:-0.3px">£352.01</div>
<div class="t" style="left:289px;top:64px;width:44px;text-align:center;font-size:9.2px;color:#333;letter-spacing:-0.3px">£0.00</div>
<div class="t" style="left:289px;top:81px;width:44px;text-align:center;font-size:9.2px;color:#333;letter-spacing:-0.3px">£352.01</div>
<div class="gl" style="left:255px">Results</div>

<!-- Calculate -->
<div class="box" style="left:349px;top:43px;width:26px;height:26px;border-color:#ececec"></div>
<div class="box" style="left:349px;top:68px;width:26px;height:26px;border-color:#ececec"></div>
<svg class="a" style="left:351px;top:46px" width="22" height="20" viewBox="0 0 22 20">
 <g fill="none" stroke-linecap="butt">
  <path d="M15.4 4.3A6.8 6.8 0 0 0 4.2 9" stroke="#44557a" stroke-width="3.6"/>
  <path d="M15.4 4.3A6.8 6.8 0 0 0 4.2 9" stroke="#dfe6f1" stroke-width="1.4"/>
  <path d="M6.6 14.7A6.8 6.8 0 0 0 17.8 10" stroke="#44557a" stroke-width="3.6"/>
  <path d="M6.6 14.7A6.8 6.8 0 0 0 17.8 10" stroke="#dfe6f1" stroke-width="1.4"/>
 </g>
 <path d="M1 8.3H7.4L4.2 12.6Z" fill="#dfe6f1" stroke="#44557a" stroke-width="1.1" stroke-linejoin="round"/>
 <path d="M14.6 10.7H21L17.8 6.4Z" fill="#dfe6f1" stroke="#44557a" stroke-width="1.1" stroke-linejoin="round"/>
</svg>
<svg class="a" style="left:352px;top:70px" width="20" height="21" viewBox="0 0 20 21">
 <rect x="1" y="1" width="18" height="19" rx="1.5" fill="#f7dde0" stroke="#3f4a78" stroke-width="1.6"/>
 <rect x="3.5" y="3.2" width="13" height="3" fill="#e0313f"/>
 <rect x="1.8" y="7.6" width="16.4" height="0.9" fill="#cfa8b8"/>
 <g fill="#fff" stroke="#e0313f" stroke-width="1.2"><rect x="3.6" y="9.8" width="3.4" height="3.2"/><rect x="8.6" y="9.8" width="3.4" height="3.2"/><rect x="3.6" y="14.6" width="3.4" height="3.2"/><rect x="8.6" y="14.6" width="3.4" height="3.2"/></g>
 <rect x="13.6" y="9.8" width="3.2" height="8" fill="#8a7aa8" stroke="#e0313f" stroke-width="0.8"/>
</svg>
<div class="gl" style="left:344px">Calculate</div>

<!-- Reports -->
<svg class="a" style="left:392px;top:44px" width="36" height="44" viewBox="0 0 36 44">
 <path d="M2 2H23L34 13V42H2Z" fill="#fff" stroke="#3d4d6e" stroke-width="2.2" stroke-linejoin="miter"/>
 <path d="M23 2V13H34" fill="none" stroke="#3d4d6e" stroke-width="2.2"/>
 <path d="M14 19.3C13.2 17.8 12 17.2 10.5 17.2C8.3 17.2 7 18.5 7 20.4C7 25 14.2 23.4 14.2 28.6C14.2 30.8 12.6 32.4 10.4 32.4C8.6 32.4 7.2 31.6 6.5 29.8" fill="none" stroke="#4a8fdf" stroke-width="2.3"/><path d="M10.5 14.3V35.5" stroke="#4a8fdf" stroke-width="2"/>
 <g stroke="#4a8fdf" stroke-width="1.6"><path d="M17 18.5H27M17 23.5H27M17 28.5H27M17 33.5H27"/></g>
</svg>
<div class="gl" style="left:395px">Reports</div>

<!-- Attachments -->
<svg class="a" style="left:441px;top:44px" width="46" height="44" viewBox="0 0 46 44">
 <path d="M21 42H2V2H23L34 13V17" fill="none" stroke="#3d4d6e" stroke-width="2.2" stroke-linejoin="miter"/>
 <path d="M23 2V13H34" fill="none" stroke="#3d4d6e" stroke-width="2.2"/>
 <path d="M0 19V4A4 4 0 0 1 8 4V23A2.6 2.6 0 0 1 2.8 23V7.5" transform="translate(31.5 30.5) rotate(45) scale(1.18) translate(-4 -13.5)" fill="none" stroke="#4a8fdf" stroke-width="2" stroke-linecap="round"/>
</svg>
<div class="gl" style="left:439px">Attachments</div>


<!-- Edit -->
<div class="box" style="left:495px;top:49px;width:11px;height:11px;border-color:#cfcfcf"></div>
<div class="t" style="left:508px;top:51px;font-size:9.4px;color:#333;letter-spacing:-0.25px">Calculation by line</div>
<div class="box" style="left:583px;top:49px;width:11px;height:11px;border-color:#cfcfcf"></div>
<div class="t" style="left:597px;top:51px;font-size:9.4px;color:#333;letter-spacing:-0.25px">Prices per quantities</div>
<svg class="a" style="left:524px;top:71px" width="25" height="20" viewBox="0 0 25 20">
 <g fill="#3d4d75">
  <rect x="9" y="0.5" width="3" height="2"/><rect x="14" y="0.5" width="3" height="2"/>
  <rect x="6.5" y="2.5" width="13" height="4.6"/>
  <rect x="1" y="7" width="2.5" height="1.2"/><rect x="20" y="7" width="2.5" height="1.2"/>
  <rect x="1" y="8" width="11" height="6.8"/><rect x="13" y="8" width="11" height="6.8"/>
  <rect x="1" y="16" width="23" height="3.5"/>
 </g>
 <rect x="1" y="14.8" width="23" height="1.2" fill="#b8c0d0"/>
</svg>
<svg class="a" style="left:555px;top:71px" width="17" height="21" viewBox="0 0 17 21">
 <path d="M6 2.8V1H11V2.8" fill="none" stroke="#3d4d75" stroke-width="1.4"/>
 <rect x="1" y="3" width="15" height="3" fill="#6aa6e6" stroke="#3d4d75" stroke-width="1.4"/>
 <path d="M2.3 6V19.5H14.7V6" fill="#fff" stroke="#3d4d75" stroke-width="1.6"/>
 <g stroke="#5b9be0" stroke-width="1.2"><path d="M5.5 8V18M8.5 8V18M11.5 8V18"/></g>
</svg>
<svg class="a" style="left:577px;top:70px" width="22" height="21" viewBox="0 0 22 21">
 <circle cx="12" cy="8" r="6.5" fill="#fff" stroke="#3d4d75" stroke-width="1.6"/>
 <path d="M7.5 12.8L1.8 18.8" stroke="#3d4d75" stroke-width="3" stroke-linecap="round"/>
 <path d="M1.8 18.8L7.5 12.8" stroke="#fff" stroke-width="1" stroke-linecap="round"/>
 <path d="M9.5 17.2Q15 12 20.8 17.2Q15 22.4 9.5 17.2Z" fill="#4a8fdf"/>
 <circle cx="15.2" cy="17.2" r="1.6" fill="#fff"/>
</svg>
<svg class="a" style="left:603px;top:71px" width="20" height="20" viewBox="0 0 20 20">
 <g fill="none" stroke="#3d4d75" stroke-width="2"><path d="M1.5 1.5L7 7M7 3V7H3M18.5 1.5L13 7M13 3V7H17M1.5 18.5L7 13M7 17V13H3M18.5 18.5L13 13M13 17V13H17"/></g>
</svg>
<svg class="a" style="left:628px;top:71px" width="20" height="20" viewBox="0 0 20 20">
 <g fill="none" stroke="#3d4d75" stroke-width="2"><path d="M2 2L7.5 7.5M2 6.5V2H6.5M18 2L12.5 7.5M18 6.5V2H13.5M2 18L7.5 12.5M2 13.5V18H6.5M18 18L12.5 12.5M18 13.5V18H13.5"/></g>
</svg>
<div class="gl" style="left:579px">Edit</div>

<!-- Part type -->
<svg class="a" style="left:688px;top:45px" width="38" height="40" viewBox="0 0 38 40">
 <path d="M17 31.5H2.5V2.5H17.5L26 11V18" fill="#fff" stroke="#3d4d6e" stroke-width="2.1" stroke-linejoin="miter"/>
 <path d="M17.5 2.5V11H26" fill="none" stroke="#3d4d6e" stroke-width="2.1"/>
 <circle cx="25.6" cy="29.4" r="9.2" fill="#fff" stroke="#3d4d6e" stroke-width="2.1"/>
 <path d="M18.5 29.4H32.7M25.6 22.3V36.5" stroke="#4a8fdf" stroke-width="2.1"/>
</svg>
<svg class="a" style="left:731px;top:44px" width="44" height="44" viewBox="0 0 44 44">
 <path d="M2.3 2.2H17A10.5 10.5 0 0 1 27.5 12.7V41.8H2.3Z" fill="#fff" stroke="#3d4d6e" stroke-width="2.1"/>
 <circle cx="14.3" cy="14.8" r="4.5" fill="#fff" stroke="#4a8fdf" stroke-width="1.8"/>
 <rect x="8.3" y="24.5" width="12" height="12.2" fill="#fff" stroke="#4a8fdf" stroke-width="1.8"/>
 <path d="M30.5 15.8L40 6.3" stroke="#3d4d6e" stroke-width="5.6" stroke-linecap="round"/><path d="M30.5 15.8L40 6.3" stroke="#8cbdf0" stroke-width="3.2" stroke-linecap="round"/><path d="M32 16.5L39.5 9M30 14.5L37.5 7" stroke="#4a8fdf" stroke-width="0.6"/><path d="M28.3 14.2L32.2 18.1L27.2 19.4Z" fill="#3d4d6e"/>
</svg>
<svg class="a" style="left:777px;top:45px" width="30" height="43" viewBox="0 0 30 43">
 <rect x="1.6" y="1.6" width="26" height="38" fill="#fff" stroke="#3d4d6e" stroke-width="2"/>
 <path d="M1.6 14H27.6M1.6 26.8H27.6" stroke="#3d4d6e" stroke-width="2"/>
 <rect x="1" y="39" width="3.5" height="3" fill="#3d4d6e"/><rect x="24.7" y="39" width="3.5" height="3" fill="#3d4d6e"/>
 <path d="M3.5 4H9.5L11.5 6.5V13H3.5Z" fill="#4a8fdf"/>
 <rect x="3.5" y="17" width="2" height="9" fill="#6aa6e6"/><rect x="6.5" y="17" width="2" height="9" fill="#6aa6e6"/>
 <rect x="19.5" y="30" width="2" height="9" fill="#6aa6e6"/><rect x="22.5" y="30" width="2" height="9" fill="#6aa6e6"/>
</svg>
<svg class="a" style="left:809px;top:45px" width="34" height="42" viewBox="0 0 34 42">
 <g fill="#3d4d6e">
  <rect x="1.5" y="0.8" width="12" height="2.6"/><rect x="5.6" y="3" width="3.8" height="5"/><rect x="1.5" y="7.8" width="12" height="2.6"/>
  <rect x="1.5" y="30" width="12" height="3"/><rect x="5.6" y="32" width="3.8" height="9"/>
  <rect x="19.5" y="14.5" width="3.3" height="11.5"/><rect x="29" y="14.5" width="3.3" height="11.5"/><rect x="19.5" y="18.5" width="12.8" height="3.2"/>
 </g>
 <rect x="2.9" y="16" width="9.4" height="9.4" fill="none" stroke="#3d4d6e" stroke-width="2.8"/>
 <path d="M22.5 1.8H28.8L32 6L28.8 10.2H22.5L19.3 6Z" fill="none" stroke="#3d4d6e" stroke-width="2.4" stroke-linejoin="round"/>
 <circle cx="25.9" cy="35.5" r="4.8" fill="none" stroke="#3d4d6e" stroke-width="2.8"/>
</svg>
<div class="gl" style="left:747px">Part type</div>

<!-- Time limits -->
<div class="t" style="left:850px;top:52px;font-size:9.4px;color:#8a8a8a;letter-spacing:-0.2px">Order before :</div>
<div class="t" style="left:850px;top:76px;font-size:9.4px;color:#8a8a8a;letter-spacing:-0.2px">Delivery date :</div>
<div class="box" style="left:908px;top:48px;width:65px;height:17px;border-color:#e2e2e2"></div>
<div class="box" style="left:908px;top:72px;width:65px;height:16px;border-color:#e2e2e2"></div>
<div class="t" style="left:913px;top:52px;font-size:9.6px;color:#333;letter-spacing:-0.25px">09/10/2018</div>
<div class="t" style="left:913px;top:76px;font-size:9.6px;color:#333;letter-spacing:-0.25px">09/10/2018</div>
<svg class="a" style="left:962px;top:51px" width="8" height="10" viewBox="0 0 8 10"><rect x="0.5" y="1.5" width="7" height="8" fill="none" stroke="#777" stroke-width="0.9"/><path d="M0.5 3.5H7.5M2 0V2M6 0V2M4 4.5V8.5M2.8 5.6L4 4.5L5.2 5.6" stroke="#777" stroke-width="0.8" fill="none"/></svg>
<svg class="a" style="left:962px;top:75px" width="8" height="10" viewBox="0 0 8 10"><rect x="0.5" y="1.5" width="7" height="8" fill="none" stroke="#777" stroke-width="0.9"/><path d="M0.5 3.5H7.5M2 0V2M6 0V2M4 4.5V8.5M2.8 5.6L4 4.5L5.2 5.6" stroke="#777" stroke-width="0.8" fill="none"/></svg>
<div class="gl" style="left:893px">Time limits</div>
<div class="t" style="left:983px;top:77px;font-size:9.4px;color:#aaa">De</div>
<div class="a" style="left:989px;top:41px;width:9px;height:68px;background:#fff"></div>
<div class="a" style="left:989px;top:42px;width:1px;height:66px;background:#e6e6e6"></div>
<svg class="a" style="left:994px;top:73px" width="3" height="5" viewBox="0 0 3 5"><path d="M0 0L3 2.5L0 5Z" fill="#555"/></svg>

</body></html>
